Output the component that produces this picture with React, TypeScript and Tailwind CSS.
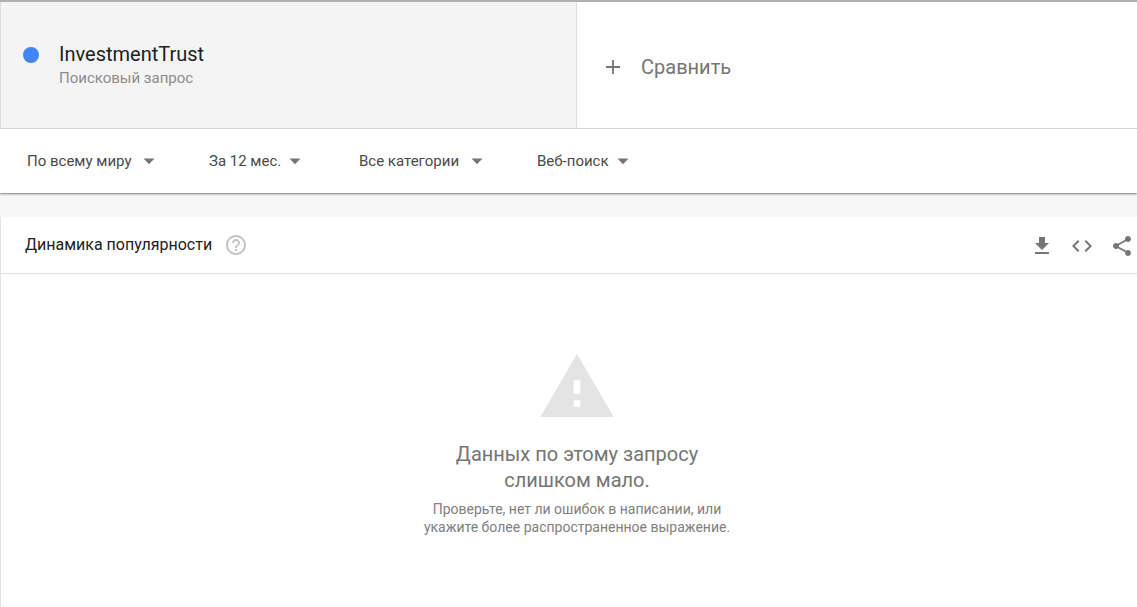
import React from 'react'

type IconProps = { d: string; className?: string }

function Icon({ d, className = 'size-6' }: IconProps) {
  return (
    <svg viewBox="0 0 24 24" fill="currentColor" aria-hidden="true" className={`shrink-0 ${className}`}>
      <path d={d} />
    </svg>
  )
}

const ICONS = {
  plus: 'M19 12.9h-6.1V19h-1.8v-6.1H5v-1.8h6.1V5h1.8v6.1H19z',
  arrow: 'M6.5 9.5l5.5 5.7 5.5-5.7z',
  help: 'M11 18h2v-2h-2v2zm1-16C6.48 2 2 6.48 2 12s4.48 10 10 10 10-4.48 10-10S17.52 2 12 2zm0 18c-4.41 0-8-3.59-8-8s3.59-8 8-8 8 3.59 8 8-3.59 8-8 8zm0-14c-2.21 0-4 1.79-4 4h2c0-1.1.9-2 2-2s2 .9 2 2c0 2-3 1.75-3 5h2c0-2.25 3-2.5 3-5 0-2.21-1.79-4-4-4z',
  download: 'M19 9h-4V3H9v6H5l7 7 7-7zM5 18v2h14v-2H5z',
  code: 'M9.4 16.6L4.8 12l4.6-4.6L8 6l-6 6 6 6 1.4-1.4zm5.2 0l4.6-4.6-4.6-4.6L16 6l6 6-6 6-1.4-1.4z',
  share: 'M18 16.08c-.76 0-1.44.3-1.96.77L8.91 12.7c.05-.23.09-.46.09-.7s-.04-.47-.09-.7l7.05-4.11c.54.5 1.25.81 2.04.81 1.66 0 3-1.34 3-3s-1.34-3-3-3-3 1.34-3 3c0 .24.04.47.09.7L8.04 9.81C7.5 9.31 6.79 9 6 9c-1.66 0-3 1.34-3 3s1.34 3 3 3c.79 0 1.5-.31 2.04-.81l7.12 4.16c-.05.21-.08.43-.08.65 0 1.61 1.31 2.92 2.92 2.92s2.92-1.31 2.92-2.92-1.31-2.92-2.92-2.92z',
  warning: 'M1 21h22L12 2 1 21zm12-3h-2v-2h2v2zm0-4h-2v-4h2v4z',
}

const filters = [
  { label: 'Регион', value: 'По всему миру', width: 'w-[110px]' },
  { label: 'Период', value: 'За 12 мес.', width: 'w-[74px]' },
  { label: 'Категория', value: 'Все категории', width: 'w-[106px]' },
  { label: 'Тип поиска', value: 'Веб-поиск', width: 'w-[74px]' },
]

const actions = [
  { label: 'Скачать', icon: ICONS.download },
  { label: 'Встроить', icon: ICONS.code },
  { label: 'Поделиться', icon: ICONS.share },
]

function SearchTerms() {
  return (
    <section className="grid h-[129px] grid-cols-[577fr_560fr] border-t-2 border-b border-t-[#b0b0b0] border-b-[#dedede]">
      <div className="flex border-x border-[#dedede] bg-[#f4f4f4] pt-10 pl-[22px]">
        <span className="mt-[5px] size-4 shrink-0 rounded-full bg-[#4285f4]" />
        <div className="ml-5">
          <h1 className="text-[20px] leading-6 text-[#212121]">InvestmentTrust</h1>
          <p className="text-[15px] leading-6 text-[#8c8c8c]">Поисковый запрос</p>
        </div>
      </div>
      <button type="button" className="flex items-center gap-4 pt-[3px] pl-6 text-[20px] text-[#757575]">
        <Icon d={ICONS.plus} />
        Сравнить
      </button>
    </section>
  )
}

function Filters() {
  return (
    <section className="relative grid h-16 grid-cols-[182px_150px_178px_auto] items-center bg-white pl-[27px] shadow-[0_1px_2px_rgba(0,0,0,0.5)]">
      {filters.map((filter) => (
        <label key={filter.label} className="flex items-center text-[#4a4a4a]">
          <select aria-label={filter.label} className={`appearance-none bg-transparent text-[15px] leading-6 ${filter.width}`}>
            <option>{filter.value}</option>
          </select>
          <Icon d={ICONS.arrow} className="size-6 text-[#757575]" />
        </label>
      ))}
    </section>
  )
}

function TrendCard() {
  return (
    <section className="mt-6 grow border-l border-[#e4e4e4] bg-white">
      <header className="flex h-[57px] items-center border-b border-[#dedede] pr-[3px] pl-6">
        <h2 className="text-[16px] leading-6 text-[#212121]">Динамика популярности</h2>
        <button type="button" aria-label="Справка" className="ml-3 text-[#c4c4c4]">
          <Icon d={ICONS.help} />
        </button>
        <div className="ml-auto flex gap-4 pt-0.5 text-[#757575]">
          {actions.map((action) => (
            <button key={action.label} type="button" aria-label={action.label}>
              <Icon d={action.icon} />
            </button>
          ))}
        </div>
      </header>
      <div className="flex flex-col items-center pt-[73px] pb-16 pl-4 text-center text-[#757575]">
        <Icon d={ICONS.warning} className="size-20 text-[#e4e4e4]" />
        <p className="mt-3.5 text-[20px] leading-[26px]">
          Данных по этому запросу
          <br />
          слишком мало.
        </p>
        <p className="mt-[7px] text-[14px] leading-[18px] text-[#808080]">
          Проверьте, нет ли ошибок в написании, или
          <br />
          укажите более распространенное выражение.
        </p>
      </div>
    </section>
  )
}

export default function App() {
  return (
    <main className="flex min-h-screen flex-col bg-[#f6f6f6] font-[Roboto,sans-serif]">
      <div className="bg-white">
        <SearchTerms />
        <Filters />
      </div>
      <TrendCard />
    </main>
  )
}
